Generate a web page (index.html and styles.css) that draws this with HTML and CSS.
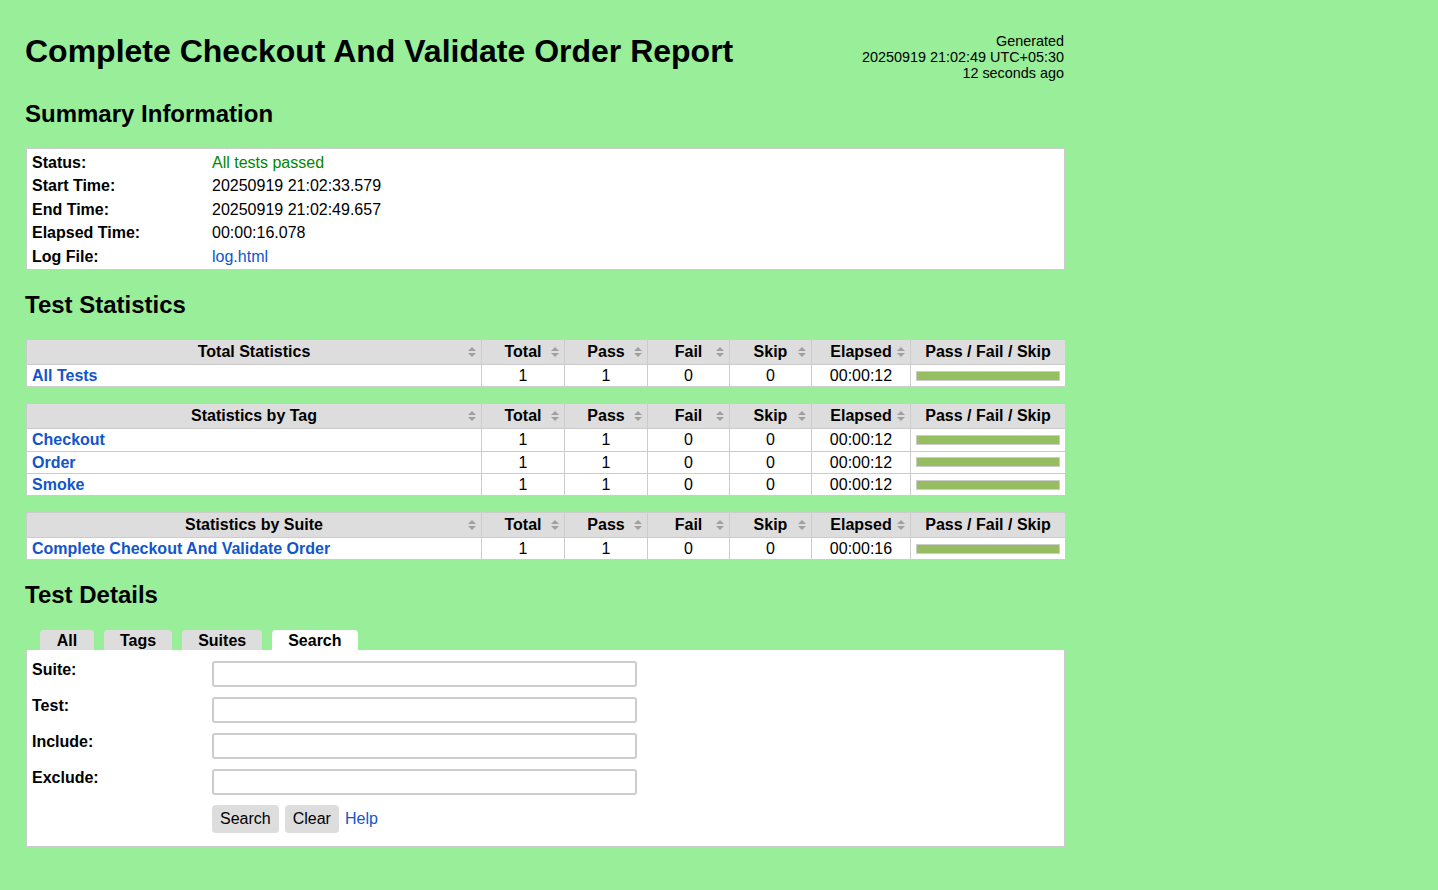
FILE: index.html
```html
<!DOCTYPE html>
<html>
<head>
<meta charset="utf-8">
<title>Complete Checkout And Validate Order Report</title>
<link rel="stylesheet" href="styles.css">
</head>
<body>
<div class="page">
  <header class="header">
    <h1 class="title">Complete Checkout And Validate Order Report</h1>
    <div class="generated">Generated<br>20250919 21:02:49 UTC+05:30<br>12 seconds ago</div>
  </header>

  <h2 class="section-title">Summary Information</h2>
  <div class="summary-box">
    <table class="summary">
      <tr><th>Status:</th><td class="pass-text">All tests passed</td></tr>
      <tr><th>Start Time:</th><td>20250919 21:02:33.579</td></tr>
      <tr><th>End Time:</th><td>20250919 21:02:49.657</td></tr>
      <tr><th>Elapsed Time:</th><td>00:00:16.078</td></tr>
      <tr><th>Log File:</th><td><a href="#" class="link">log.html</a></td></tr>
    </table>
  </div>

  <h2 class="section-title">Test Statistics</h2>
  <table class="stats">
    <colgroup><col class="c-name"><col class="c-num"><col class="c-num"><col class="c-num2"><col class="c-num2"><col class="c-el"><col class="c-graph"></colgroup>
    <thead><tr>
      <th class="sortable">Total Statistics</th><th class="sortable">Total</th><th class="sortable">Pass</th><th class="sortable">Fail</th><th class="sortable">Skip</th><th class="sortable">Elapsed</th><th>Pass / Fail / Skip</th>
    </tr></thead>
    <tbody>
      <tr><td class="name"><a href="#" class="stat-link">All Tests</a></td><td>1</td><td>1</td><td>0</td><td>0</td><td>00:00:12</td><td class="graph-cell"><div class="graph"><div class="pass-bar"></div></div></td></tr>
    </tbody>
  </table>

  <table class="stats">
    <colgroup><col class="c-name"><col class="c-num"><col class="c-num"><col class="c-num2"><col class="c-num2"><col class="c-el"><col class="c-graph"></colgroup>
    <thead><tr>
      <th class="sortable">Statistics by Tag</th><th class="sortable">Total</th><th class="sortable">Pass</th><th class="sortable">Fail</th><th class="sortable">Skip</th><th class="sortable">Elapsed</th><th>Pass / Fail / Skip</th>
    </tr></thead>
    <tbody>
      <tr><td class="name"><a href="#" class="stat-link">Checkout</a></td><td>1</td><td>1</td><td>0</td><td>0</td><td>00:00:12</td><td class="graph-cell"><div class="graph"><div class="pass-bar"></div></div></td></tr>
      <tr><td class="name"><a href="#" class="stat-link">Order</a></td><td>1</td><td>1</td><td>0</td><td>0</td><td>00:00:12</td><td class="graph-cell"><div class="graph"><div class="pass-bar"></div></div></td></tr>
      <tr><td class="name"><a href="#" class="stat-link">Smoke</a></td><td>1</td><td>1</td><td>0</td><td>0</td><td>00:00:12</td><td class="graph-cell"><div class="graph"><div class="pass-bar"></div></div></td></tr>
    </tbody>
  </table>

  <table class="stats">
    <colgroup><col class="c-name"><col class="c-num"><col class="c-num"><col class="c-num2"><col class="c-num2"><col class="c-el"><col class="c-graph"></colgroup>
    <thead><tr>
      <th class="sortable">Statistics by Suite</th><th class="sortable">Total</th><th class="sortable">Pass</th><th class="sortable">Fail</th><th class="sortable">Skip</th><th class="sortable">Elapsed</th><th>Pass / Fail / Skip</th>
    </tr></thead>
    <tbody>
      <tr><td class="name"><a href="#" class="stat-link">Complete Checkout And Validate Order</a></td><td>1</td><td>1</td><td>0</td><td>0</td><td>00:00:16</td><td class="graph-cell"><div class="graph"><div class="pass-bar"></div></div></td></tr>
    </tbody>
  </table>

  <h2 class="section-title details-title">Test Details</h2>
  <div class="tabs">
    <span class="tab tab-all">All</span>
    <span class="tab">Tags</span>
    <span class="tab">Suites</span>
    <span class="tab tab-selected">Search</span>
  </div>
  <div class="panel">
    <form class="search-form">
      <label class="field-label">Suite:</label><input class="field-input" type="text">
      <label class="field-label">Test:</label><input class="field-input" type="text">
      <label class="field-label">Include:</label><input class="field-input" type="text">
      <label class="field-label">Exclude:</label><input class="field-input" type="text">
      <span></span>
      <div class="actions">
        <button type="button" class="btn">Search</button>
        <button type="button" class="btn">Clear</button>
        <a href="#" class="link help">Help</a>
      </div>
    </form>
  </div>
</div>
</body>
</html>
```

FILE: styles.css
```css
html, body {
  margin: 0;
  padding: 0;
  background: #99ee99;
}
body {
  font-family: "Liberation Sans", Arial, Helvetica, sans-serif;
  font-size: 16px;
  color: #000;
}
.page {
  width: 1039px;
  margin-left: 26px;
  padding-bottom: 40px;
}
.header {
  display: flex;
  justify-content: space-between;
  align-items: flex-start;
  padding-top: 33px;
}
.title {
  margin: 0 0 0 -1px;
  font-size: 32px;
  line-height: 37px;
  font-weight: bold;
}
.generated {
  margin-top: 0;
  margin-right: 1px;
  text-align: right;
  font-size: 14.4px;
  line-height: 16px;
}
.section-title {
  font-size: 24px;
  line-height: 28px;
  font-weight: bold;
  margin: 21px 0 20px -1px;
}
.header + .section-title {
  margin-top: 19px;
}
.summary-box {
  background: #fff;
  border: 1px solid #ccc;
  padding: 1.5px 0 1px 0;
}
.summary {
  border-collapse: collapse;
}
.summary th {
  text-align: left;
  font-weight: bold;
  width: 175px;
  padding: 0 5px;
  line-height: 23.5px;
}
.summary td {
  padding: 0 5px 0 0;
  line-height: 23.5px;
}
.pass-text {
  color: #008800;
}
.link {
  color: #1155cc;
  text-decoration: none;
}
.stats {
  width: 1039px;
  table-layout: fixed;
  border-collapse: collapse;
  background: #fff;
  margin-bottom: 16px;
}
.c-name { width: 455px; }
.c-num { width: 83px; }
.c-num2 { width: 82px; }
.c-el { width: 99px; }
.c-graph { width: 155px; }
.stats th {
  position: relative;
  background: #dddddd;
  border: 1px solid #cccccc;
  padding: 2px 5px;
  line-height: 20px;
  font-weight: bold;
  text-align: center;
  white-space: nowrap;
}
.stats td {
  border: 1px solid #cccccc;
  padding: 2px 5px;
  line-height: 17.3px;
  text-align: center;
  white-space: nowrap;
}
.stats td.name {
  text-align: left;
}
.stat-link {
  color: #1155cc;
  font-weight: bold;
  text-decoration: none;
}
.sortable::before,
.sortable::after {
  content: "";
  position: absolute;
  right: 5px;
  width: 0;
  height: 0;
  border-left: 4.5px solid transparent;
  border-right: 4.5px solid transparent;
}
.sortable::before {
  top: 50%;
  margin-top: -5px;
  border-bottom: 4.5px solid #a0a0a0;
}
.sortable::after {
  top: 50%;
  margin-top: 1px;
  border-top: 4.5px solid #a0a0a0;
}
.graph-cell {
  padding: 0 5px;
}
.graph {
  border: 1px solid #cccccc;
  height: 8px;
  background: #fff;
}
.pass-bar {
  height: 100%;
  width: 100%;
  background: #97bd61;
}
.details-title {
  margin-top: 21px;
  margin-bottom: 21px;
}
.tabs {
  display: flex;
  gap: 10px;
  padding-left: 14px;
  height: 20px;
  align-items: flex-end;
}
.tab {
  display: block;
  background: #dddddd;
  border-radius: 4px 4px 0 0;
  padding: 0 16px;
  height: 20px;
  line-height: 21px;
  font-weight: bold;
  text-align: center;
}
.tab-all {
  min-width: 22px;
}
.tab-selected {
  background: #fff;
}
.panel {
  background: #fff;
  border: 1px solid #cccccc;
  border-top: none;
  padding: 11px 5px 13px 5px;
}
.search-form {
  display: grid;
  grid-template-columns: 180px 425px;
  row-gap: 10px;
  margin: 0;
}
.field-label {
  font-weight: bold;
  line-height: 18px;
}
.field-input {
  box-sizing: border-box;
  width: 425px;
  height: 26px;
  margin: 0;
  border: 2px solid #cccccc;
  border-radius: 3px;
  background: #fff;
}
.actions {
  display: flex;
  align-items: center;
  gap: 6px;
}
.btn {
  font-family: "Liberation Sans", Arial, Helvetica, sans-serif;
  font-size: 16px;
  background: #dddddd;
  border: none;
  border-radius: 4px;
  height: 28px;
  padding: 0 8px;
  color: #000;
}
.help {
  font-size: 16px;
}
```
